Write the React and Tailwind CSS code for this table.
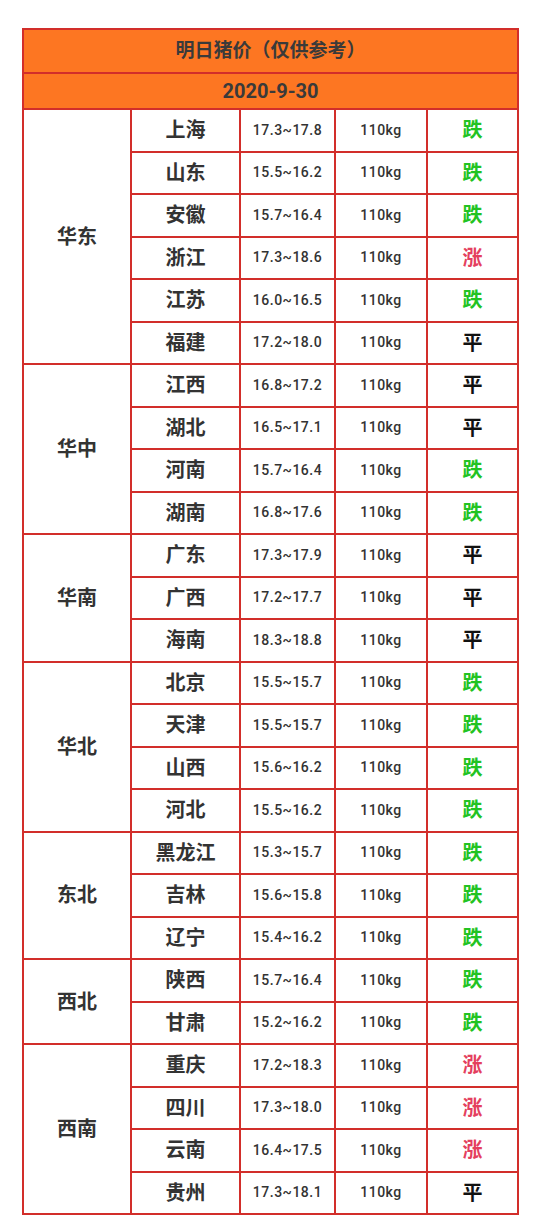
import React from 'react';

const groups = [
  {
    region: '华东',
    rows: [
      ['上海', '17.3~17.8', '跌'],
      ['山东', '15.5~16.2', '跌'],
      ['安徽', '15.7~16.4', '跌'],
      ['浙江', '17.3~18.6', '涨'],
      ['江苏', '16.0~16.5', '跌'],
      ['福建', '17.2~18.0', '平'],
    ],
  },
  {
    region: '华中',
    rows: [
      ['江西', '16.8~17.2', '平'],
      ['湖北', '16.5~17.1', '平'],
      ['河南', '15.7~16.4', '跌'],
      ['湖南', '16.8~17.6', '跌'],
    ],
  },
  {
    region: '华南',
    rows: [
      ['广东', '17.3~17.9', '平'],
      ['广西', '17.2~17.7', '平'],
      ['海南', '18.3~18.8', '平'],
    ],
  },
  {
    region: '华北',
    rows: [
      ['北京', '15.5~15.7', '跌'],
      ['天津', '15.5~15.7', '跌'],
      ['山西', '15.6~16.2', '跌'],
      ['河北', '15.5~16.2', '跌'],
    ],
  },
  {
    region: '东北',
    rows: [
      ['黑龙江', '15.3~15.7', '跌'],
      ['吉林', '15.6~15.8', '跌'],
      ['辽宁', '15.4~16.2', '跌'],
    ],
  },
  {
    region: '西北',
    rows: [
      ['陕西', '15.7~16.4', '跌'],
      ['甘肃', '15.2~16.2', '跌'],
    ],
  },
  {
    region: '西南',
    rows: [
      ['重庆', '17.2~18.3', '涨'],
      ['四川', '17.3~18.0', '涨'],
      ['云南', '16.4~17.5', '涨'],
      ['贵州', '17.3~18.1', '平'],
    ],
  },
];

const trendColor = {
  跌: 'text-[#22c322]',
  涨: 'text-[#e4405e]',
  平: 'text-[#111111]',
};

const cell = 'border-2 border-[#d22e2a] text-center p-0';

export default function App() {
  return (
    <div
      className="bg-white w-[540px] min-h-[1222px] pt-[28px] pl-[22px]"
      style={{ fontFamily: 'Roboto, "Noto Sans CJK SC", sans-serif' }}
    >
      <table className="border-collapse w-[495px] table-fixed text-[#333333]">
        <colgroup>
          <col className="w-[108px]" />
          <col className="w-[109px]" />
          <col className="w-[95px]" />
          <col className="w-[92px]" />
          <col className="w-[91px]" />
        </colgroup>
        <tbody>
          <tr className="h-[44px] bg-[#fd7622]">
            <td colSpan={5} className={`${cell} text-[19px] font-bold text-[#3a3a3a]`}>
              明日猪价（仅供参考）
            </td>
          </tr>
          <tr className="h-[36px] bg-[#fd7622]">
            <td colSpan={5} className={`${cell} text-[20px] font-bold text-[#3a3a3a]`}>
              2020-9-30
            </td>
          </tr>
          {groups.map((g) =>
            g.rows.map((r, i) => (
              <tr key={r[0]} className="h-[42.5px]">
                {i === 0 && (
                  <td rowSpan={g.rows.length} className={`${cell} text-[20px] font-bold`}>
                    {g.region}
                  </td>
                )}
                <td className={`${cell} text-[20px] font-bold`}>{r[0]}</td>
                <td className={`${cell} text-[14px] font-medium tracking-[0.5px]`}>{r[1]}</td>
                <td className={`${cell} text-[14px] font-medium tracking-[0.5px]`}>110kg</td>
                <td className={`${cell} text-[20px] font-bold ${trendColor[r[2]]}`}>{r[2]}</td>
              </tr>
            ))
          )}
        </tbody>
      </table>
    </div>
  );
}
